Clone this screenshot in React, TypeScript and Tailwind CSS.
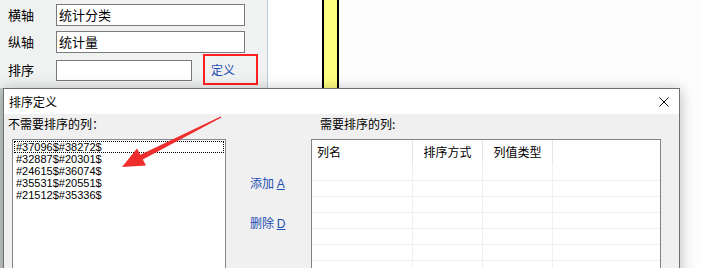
import React from 'react';

const items = ['#37096$#38272$', '#32887$#20301$', '#24615$#36074$', '#35531$#20551$', '#21512$#35336$'];

const FieldRow: React.FC<{ label: string; value: string }> = ({ label, value }) => (
    <div className="flex items-center h-[22px]">
        <span className="w-[56px] pl-[8px] leading-[14px] text-[13px]">{label}</span>
        <div className="w-[189px] h-full bg-white border border-[#7a7a7a] pl-[2px] leading-[20px] text-[13px]">
            {value}
        </div>
    </div>
);

const App: React.FC = () => {
    return (
        <div className="relative w-[701px] h-[268px] overflow-hidden bg-white text-[12px] text-black font-['Noto_Sans_CJK_SC',sans-serif]">
            {/* Background window */}
            <div className="flex h-full">
                <div className="w-[268px] h-full flex flex-col bg-[#f0f1f1] border-r border-[#b4cce4]">
                    <div className="flex flex-col gap-[5px] pt-[4px]">
                        <FieldRow label="横轴" value="统计分类" />
                        <FieldRow label="纵轴" value="统计量" />
                        <div className="flex items-center h-[22px] mt-[1px]">
                            <span className="w-[56px] pl-[8px] leading-[14px] text-[13px]">排序</span>
                            <div className="w-[136px] h-[21px] bg-white border border-[#7a7a7a]" />
                            <span className="ml-[19px] text-[#1c4fb4] leading-[14px] text-[12px]">定义</span>
                        </div>
                    </div>
                    <div className="mt-auto h-[180px] w-[3px] bg-[#c3ccc9]" />
                </div>
                <div className="w-[54px] h-full bg-white" />
                <div className="w-[17px] h-full border-x-2 border-black bg-[#ffff80]" />
                <div className="flex-1 h-full bg-[#fdfdfd]" />
            </div>

            {/* red highlight box */}
            <div className="absolute left-[203px] top-[54px] w-[55px] h-[31px] border-2 border-[#ff1f1f]" />

            {/* Dialog */}
            <div className="absolute left-[3px] top-[88px] w-[677px] h-[200px] border border-b-0 border-[#6f6f6f] bg-[#f0f0f0] shadow-[0_2px_14px_rgba(0,0,0,0.28)]">
                <div className="h-[25px] bg-white flex items-center justify-between pl-[5px] pr-[10px]">
                    <span className="leading-[14px]">排序定义</span>
                    <svg width="10" height="10" viewBox="0 0 10 10">
                        <path d="M0.5 0.5L9.5 9.5M9.5 0.5L0.5 9.5" stroke="#111" strokeWidth="1" />
                    </svg>
                </div>
                <div className="flex">
                    {/* left list */}
                    <div className="w-[222px] pl-[4px]">
                        <div className="mt-[3px] leading-[14px]">不需要排序的列：</div>
                        <div className="mt-[8px] ml-[4px] w-[214px] h-[140px] bg-white border border-[#828790] pt-[1px] px-[1px] font-['Liberation_Sans',sans-serif] text-[11px]">
                            {items.map((it, i) => (
                                <div
                                    key={it}
                                    className={`h-[12px] leading-[11px] px-[1px] border ${i === 0 ? 'border-dotted border-black' : 'border-transparent'}`}
                                >
                                    {it}
                                </div>
                            ))}
                        </div>
                    </div>
                    {/* buttons */}
                    <div className="w-[85px] pl-[24px] flex flex-col text-[#1c4fb4]">
                        <div className="mt-[62px] leading-[14px]">
                            添加 <span className="underline font-['Liberation_Sans',sans-serif]">A</span>
                        </div>
                        <div className="mt-[25px] leading-[14px]">
                            删除 <span className="underline font-['Liberation_Sans',sans-serif]">D</span>
                        </div>
                    </div>
                    {/* right table */}
                    <div className="w-[350px]">
                        <div className="mt-[3px] pl-[9px] leading-[14px]">需要排序的列:</div>
                        <div className="mt-[8px] h-[140px] bg-white border border-[#7f8288]">
                            <div className="flex h-[24px] items-center">
                                <div className="w-[101px] h-full flex items-center pl-[5px] border-r border-[#e6e6e6]">列名</div>
                                <div className="w-[70px] h-full flex items-center justify-center border-r border-[#e6e6e6]">排序方式</div>
                                <div className="w-[70px] h-full flex items-center justify-center border-r border-[#e6e6e6]">列值类型</div>
                                <div className="flex-1" />
                            </div>
                            <div className="mt-[1px]">
                                {[0, 1, 2, 3, 4, 5, 6].map((r) => (
                                    <div key={r} className="flex h-[16px] border-b border-[#efefef]">
                                        <div className="w-[101px] border-r border-[#efefef]" />
                                        <div className="w-[70px] border-r border-[#efefef]" />
                                        <div className="w-[70px] border-r border-[#efefef]" />
                                        <div className="flex-1" />
                                    </div>
                                ))}
                            </div>
                        </div>
                    </div>
                </div>
            </div>

            {/* red annotation arrow */}
            <svg className="absolute left-0 top-0" width="701" height="268" viewBox="0 0 701 268">
                <polygon
                    points="122,167 146,165.5 142.8,159.5 221.4,117.6 220.6,116.4 140.4,154.8 137,148.6"
                    fill="#ee2d2d"
                />
            </svg>
        </div>
    );
};

export default App;
